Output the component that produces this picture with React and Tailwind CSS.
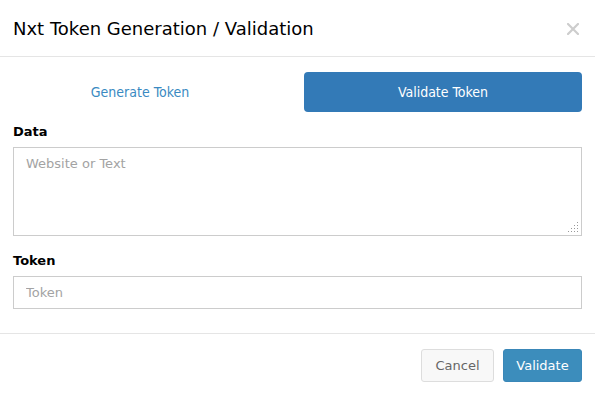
export default function App() {
  const grip = [
    [9, 0],
    [6, 3], [9, 3],
    [3, 6], [6, 6], [9, 6],
    [0, 9], [3, 9], [6, 9], [9, 9],
  ];

  return (
    <div className="w-[595px] h-[397px] bg-white font-['DejaVu_Sans',sans-serif] text-[#333] overflow-hidden">
      {/* header */}
      <div className="h-[57px] border-b border-[#e5e5e5] px-[13px] flex items-center justify-between">
        <h4 className="text-[18px] text-black leading-none pt-[1px]">Nxt Token Generation / Validation</h4>
        <svg width="12" height="12" viewBox="0 0 12 12" className="mr-[3px] mt-[1px]">
          <path d="M1 1L11 11M11 1L1 11" stroke="#cdcdcd" strokeWidth="2.2" strokeLinecap="square" />
        </svg>
      </div>

      {/* body */}
      <div className="px-[13px] pt-[15px] pb-[24px] border-b border-[#e5e5e5]">
        <div className="flex justify-between font-['DejaVu_Sans_Condensed','DejaVu_Sans',sans-serif] text-[14px]">
          <a className="w-[254px] h-[40px] flex items-center justify-center text-[#3a8ac2]">
            Generate Token
          </a>
          <a className="w-[278px] h-[40px] rounded-[4px] bg-[#337ab7] flex items-center justify-center text-white">
            Validate Token
          </a>
        </div>

        <label className="block mt-[10px] mb-[6px] text-[13px] leading-[19px] font-bold text-black">Data</label>
        <div className="relative">
          <textarea
            placeholder="Website or Text"
            className="block w-full h-[89px] border border-[#ccc] px-[12px] py-[6px] text-[13px] text-[#555] placeholder:text-[#a3a3a3] outline-none resize-none"
          />
          <svg width="11" height="11" className="absolute right-[3px] bottom-[3px]">
            {grip.map(([x, y]) => (
              <rect key={`${x}-${y}`} x={x} y={y} width="1" height="1" fill="#999" />
            ))}
          </svg>
        </div>

        <label className="block mt-[16px] mb-[6px] text-[13px] leading-[18px] font-bold text-black">Token</label>
        <input
          placeholder="Token"
          className="block w-full h-[33px] border border-[#ccc] px-[12px] text-[13px] text-[#555] placeholder:text-[#a3a3a3] outline-none"
        />
      </div>

      {/* footer */}
      <div className="px-[13px] pt-[15px] flex justify-end gap-[9px]">
        <button className="h-[33px] w-[73px] rounded-[3px] border border-[#ddd] bg-[#f8f8f8] text-[13px] text-[#666]">
          Cancel
        </button>
        <button className="h-[33px] w-[79px] rounded-[3px] border border-[#3a87b8] bg-[#3c8dbc] text-[13px] text-white">
          Validate
        </button>
      </div>
    </div>
  );
}
